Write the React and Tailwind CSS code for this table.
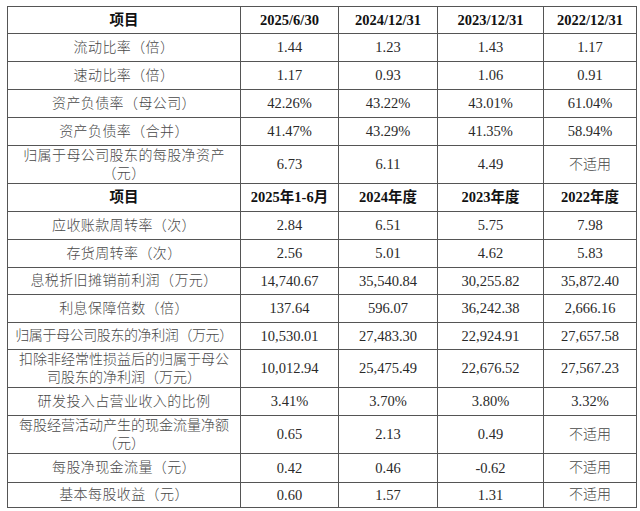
// App.jsx – financial indicators table
// row: [label, v1, v2, v3, v4, height, labelClass?]
const head1 = ['项目', '2025/6/30', '2024/12/31', '2023/12/31', '2022/12/31'];
const rows1 = [
  ['流动比率（倍）', '1.44', '1.23', '1.43', '1.17', 'h-[28px]'],
  ['速动比率（倍）', '1.17', '0.93', '1.06', '0.91', 'h-[28px]'],
  ['资产负债率（母公司）', '42.26%', '43.22%', '43.01%', '61.04%', 'h-[28px]'],
  ['资产负债率（合并）', '41.47%', '43.29%', '41.35%', '58.94%', 'h-[28px]'],
  [['归属于母公司股东的每股净资产', '（元）'], '6.73', '6.11', '4.49', '不适用', 'h-[38px]']
];

const head2 = ['项目', '2025年1-6月', '2024年度', '2023年度', '2022年度'];
const rows2 = [
  ['应收账款周转率（次）', '2.84', '6.51', '5.75', '7.98', 'h-[28px]'],
  ['存货周转率（次）', '2.56', '5.01', '4.62', '5.83', 'h-[28px]'],
  ['息税折旧摊销前利润（万元）', '14,740.67', '35,540.84', '30,255.82', '35,872.40', 'h-[27px]'],
  ['利息保障倍数（倍）', '137.64', '596.07', '36,242.38', '2,666.16', 'h-[28px]'],
  ['归属于母公司股东的净利润（万元）', '10,530.01', '27,483.30', '22,924.91', '27,657.58', 'h-[27px]', 'tracking-[-0.4px]'],
  [['扣除非经常性损益后的归属于母公', '司股东的净利润（万元）'], '10,012.94', '25,475.49', '22,676.52', '27,567.23', 'h-[38px]', 'tracking-[0px]'],
  ['研发投入占营业收入的比例', '3.41%', '3.70%', '3.80%', '3.32%', 'h-[28px]'],
  [['每股经营活动产生的现金流量净额', '（元）'], '0.65', '2.13', '0.49', '不适用', 'h-[38px]', 'tracking-[0px]'],
  ['每股净现金流量（元）', '0.42', '0.46', '-0.62', '不适用', 'h-[29px]'],
  ['基本每股收益（元）', '0.60', '1.57', '1.31', '不适用', 'h-[25px]']
];

const widths = ['w-[233px]', 'w-[98px]', 'w-[99px]', 'w-[106px]', 'w-[93px]'];

function HeadRow({ cells, height }) {
  return (
    <tr className={height}>
      {cells.map((c, i) => (
        <th key={i} className="border border-[#555] p-0 text-center align-middle text-[14.5px] font-bold text-[#111] leading-none">
          {c}
        </th>
      ))}
    </tr>
  );
}

function BodyRow({ row }) {
  const cells = row.slice(0, 5);
  const height = row[5];
  const labelClass = row[6] || 'tracking-[0.4px]';
  return (
    <tr className={height}>
      {cells.map((c, i) => {
        let cls = 'text-[14.5px] text-[#2a2a2a] leading-none';
        if (i === 0) cls = `text-[14px] font-light text-[#484848] leading-[18px] whitespace-nowrap ${labelClass}`;
        else if (c === '不适用') cls = 'text-[14px] font-light text-[#484848] leading-none';
        return (
          <td key={i} className={`border border-[#555] p-0 text-center align-middle ${cls}`}>
            {Array.isArray(c) ? (
              <>
                {c[0]}
                <br />
                {c[1]}
              </>
            ) : (
              c
            )}
          </td>
        );
      })}
    </tr>
  );
}

export default function App() {
  return (
    <div className="w-[640px] h-[511px] bg-white pt-[6px] pl-[7px] font-['Liberation_Serif','Noto_Sans_CJK_SC',serif]">
      <table className="border-collapse table-fixed w-[629px]">
        <colgroup>
          {widths.map((w, i) => (
            <col key={i} className={w} />
          ))}
        </colgroup>
        <tbody>
          <HeadRow cells={head1} height="h-[27px]" />
          {rows1.map((r, i) => (
            <BodyRow key={i} row={r} />
          ))}
          <HeadRow cells={head2} height="h-[28px]" />
          {rows2.map((r, i) => (
            <BodyRow key={i} row={r} />
          ))}
        </tbody>
      </table>
    </div>
  );
}
